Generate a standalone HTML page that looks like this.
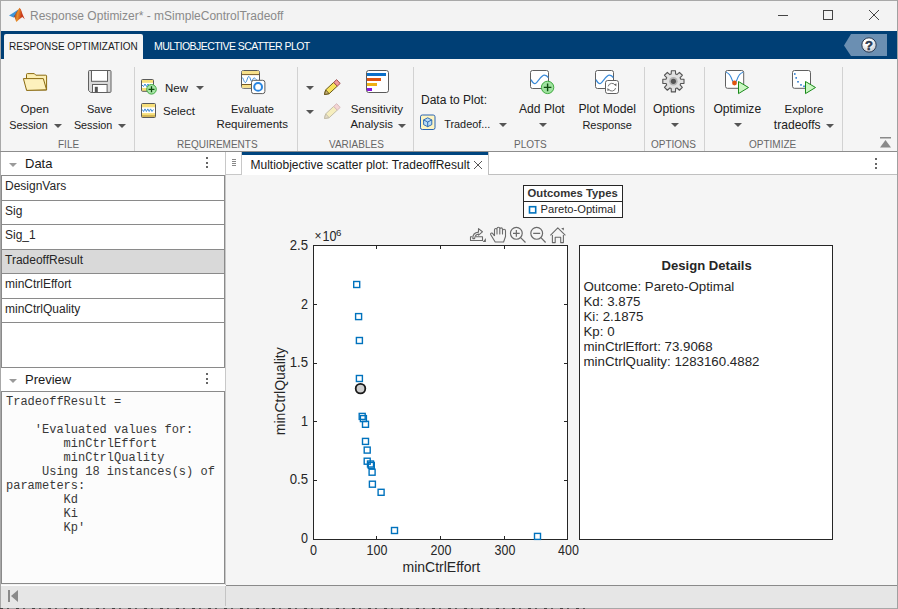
<!DOCTYPE html>
<html><head><meta charset="utf-8">
<style>
*{margin:0;padding:0;box-sizing:border-box;}
html,body{width:898px;height:609px;overflow:hidden;background:#f3f3f3;font-family:"Liberation Sans",sans-serif;}
.a{position:absolute;}
.t{position:absolute;white-space:nowrap;line-height:1;}
.ts{font-size:12px;color:#202020;}
.sec{font-size:10px;color:#666;}
.arr{position:absolute;width:0;height:0;border-left:4px solid transparent;border-right:4px solid transparent;border-top:4px solid #555;}
.sep{position:absolute;width:1px;background:#d2d2d2;top:67px;height:84px;}
.li{position:absolute;left:1px;width:223px;border-bottom:1px solid #9a9a9a;font-size:12px;color:#262626;}
.li span{position:absolute;left:4px;line-height:1;white-space:nowrap;}
.mono{font-family:"Liberation Mono",monospace;font-size:12px;color:#383838;line-height:14px;white-space:pre;}
</style></head>
<body>
<!-- window border -->
<div class="a" style="left:0;top:0;width:898px;height:609px;border:1px solid #a8a8a8;border-bottom:none;"></div>
<!-- title bar -->
<div class="a" style="left:1px;top:1px;width:896px;height:30px;background:#f3f3f3;"></div>
<svg class="a" style="left:0;top:0" width="30" height="30" viewBox="0 0 30 30">
  <defs><linearGradient id="og" x1="0" y1="0" x2="1" y2="0.3"><stop offset="0" stop-color="#8a1c12"/><stop offset="0.5" stop-color="#e8902a"/><stop offset="1" stop-color="#c8391a"/></linearGradient></defs>
  <polygon points="9,15.5 13,13 17.5,10 19,9.5 15.5,15 13.5,17.5" fill="#3d95d8"/>
  <polygon points="19.5,7.8 21,10 22.5,14 24.8,19.2 22.3,17 20,16" fill="#c83a1e"/>
  <polygon points="19.5,7.8 21,10 22.3,17 19,19.5 16.3,22 14.5,17 16,13" fill="url(#og)"/>
  <polygon points="19,9 16,13 14.5,17 13.5,17.5 15.5,14" fill="#6a1410"/>
  <polygon points="16.3,22 19,19.5 17.5,21" fill="#f0c030"/>
</svg>
<div class="t" style="left:30px;top:10px;font-size:12px;color:#8a8a8a;">Response Optimizer* - mSimpleControlTradeoff</div>
<!-- window controls -->
<div class="a" style="left:778px;top:15px;width:10px;height:1px;background:#444;"></div>
<div class="a" style="left:823px;top:10px;width:10px;height:10px;border:1px solid #444;"></div>
<svg class="a" style="left:868px;top:9px" width="12" height="12" viewBox="0 0 12 12"><path d="M1 1 L11 11 M11 1 L1 11" stroke="#444" stroke-width="1"/></svg>

<!-- blue tab bar -->
<div class="a" style="left:1px;top:31px;width:896px;height:28px;background:#003f75;"></div>
<div class="a" style="left:4px;top:34px;width:139px;height:25px;background:#f5f5f5;border-radius:2px 2px 0 0;"></div>
<div class="t" style="left:9px;top:41.5px;font-size:10px;color:#1a1a1a;">RESPONSE OPTIMIZATION</div>
<div class="t" style="left:154px;top:41px;font-size:10.5px;color:#ffffff;letter-spacing:-0.55px;">MULTIOBJECTIVE SCATTER PLOT</div>
<svg class="a" style="left:844px;top:34px" width="44" height="23" viewBox="0 0 44 23">
  <polygon points="0,11.5 7,0 43,0 43,22 7,22" fill="#6b8fb2"/>
  <defs><radialGradient id="hg" cx="0.4" cy="0.3" r="0.8"><stop offset="0.3" stop-color="#fff"/><stop offset="1" stop-color="#b8bcc4"/></radialGradient></defs>
  <circle cx="25" cy="11" r="7.2" fill="url(#hg)" stroke="#2a3a52" stroke-width="1"/>
  <text x="25" y="15.6" font-family="Liberation Sans" font-weight="bold" font-size="13" text-anchor="middle" fill="#2b3950" stroke="#2b3950" stroke-width="0.5">?</text>
</svg>

<!-- toolstrip -->
<div class="a" style="left:1px;top:59px;width:896px;height:92px;background:#f5f5f5;"></div>
<div class="a" style="left:0;top:151px;width:898px;height:1px;background:#8d8d8d;"></div>
<div class="sep" style="left:134px"></div>
<div class="sep" style="left:297px"></div>
<div class="sep" style="left:413px"></div>
<div class="sep" style="left:644px"></div>
<div class="sep" style="left:704px"></div>
<div class="sep" style="left:842px"></div>

<!-- FILE -->
<svg class="a" style="left:20px;top:70px" width="30" height="24" viewBox="20 70 30 24">
  <path d="M26.5,90 L26.5,74.5 Q26.5,73.6 27.4,73.6 L34.3,73.6 L35.8,75.2 L45.8,75.2 Q46.6,75.2 46.6,76 L46.6,90 Z" fill="#fcefb4" stroke="#8a6a10" stroke-width="1"/>
  <path d="M23.4,78.6 L43.3,78.6 L46.6,89.8 L26.6,90.4 Z" fill="#fdf1bd" stroke="#8a6a10" stroke-width="1" stroke-linejoin="round"/>
</svg>
<div class="t ts" style="left:20.5px;top:103.4px;font-size:11.6px;">Open</div>
<div class="t ts" style="left:9.3px;top:119.9px;font-size:10.8px;">Session</div>
<div class="arr" style="left:54px;top:124px;"></div>
<svg class="a" style="left:86px;top:68px" width="28" height="27" viewBox="86 68 28 27">
  <path d="M88.5,71.5 Q88.5,70.5 89.5,70.5 L110,70.5 Q111,70.5 111,71.5 L111,91.4 Q111,92.4 110,92.4 L90.5,92.4 L88.5,90.4 Z" fill="#d9d9d9" stroke="#606060" stroke-width="1"/>
  <rect x="91.5" y="70.5" width="16" height="10.8" fill="#fff" stroke="#606060" stroke-width="1"/>
  <rect x="92.5" y="84.5" width="14.6" height="8" fill="#fff" stroke="#606060" stroke-width="1"/>
  <rect x="94.8" y="86.8" width="3" height="5.3" fill="#555"/>
</svg>
<div class="t ts" style="left:87px;top:103.9px;font-size:11px;">Save</div>
<div class="t ts" style="left:73.9px;top:119.9px;font-size:10.8px;">Session</div>
<div class="arr" style="left:118px;top:124px;"></div>
<div class="t sec" style="left:58px;top:139.6px;">FILE</div>

<!-- REQUIREMENTS -->
<svg class="a" style="left:138px;top:76px" width="22" height="22" viewBox="138 76 22 22">
  <rect x="141.5" y="79.5" width="12" height="11.8" rx="1" fill="#f7df7a" stroke="#5a5a5a" stroke-width="1"/>
  <rect x="142" y="82.8" width="11" height="5.2" fill="#fff"/>
  <path d="M142,85 l1.5,1.5 l1.5,-2.5 l1.5,2.5 l1.5,-2.5 l1.5,2.5" fill="none" stroke="#3a8ad8" stroke-width="1"/>
  <circle cx="151.5" cy="89.3" r="4.8" fill="#a8e6a8" stroke="#3faa3f" stroke-width="1"/>
  <path d="M151.5,86.3 V92.3 M148.5,89.3 H154.5" stroke="#0e4a0e" stroke-width="1.3"/>
</svg>
<div class="t ts" style="left:165px;top:82.5px;font-size:11.5px;">New</div>
<div class="arr" style="left:196px;top:86px;"></div>
<svg class="a" style="left:139px;top:101px" width="19" height="19" viewBox="139 101 19 19">
  <rect x="141.5" y="103.5" width="14" height="14" rx="1" fill="#f7df7a" stroke="#5a5a5a" stroke-width="1"/>
  <rect x="142" y="107.3" width="13" height="5.8" fill="#fff"/>
  <path d="M142,116 H155" stroke="#9a7a2a" stroke-width="0.8"/>
  <path d="M142.2,109.5 l1.4,2 l1.4,-2.6 l1.4,2.6 l1.4,-2.6 l1.4,2.6 l1.4,-2.6 l1.4,2.6 l1.4,-2" fill="none" stroke="#3a8ad8" stroke-width="1"/>
</svg>
<div class="t ts" style="left:163px;top:105.5px;font-size:11.5px;">Select</div>
<svg class="a" style="left:238px;top:67px" width="30" height="30" viewBox="238 67 30 30">
  <rect x="241.5" y="70.5" width="18" height="17.8" rx="2" fill="#fff" stroke="#5a5a5a" stroke-width="1"/>
  <rect x="242" y="71" width="17" height="3.3" fill="#f7e08a"/>
  <path d="M242,74.6 H259" stroke="#6a4a10" stroke-width="0.9"/>
  <rect x="242" y="84.6" width="17" height="3.2" fill="#f7e08a"/>
  <path d="M242,84.5 H259" stroke="#6a4a10" stroke-width="0.9"/>
  <path d="M242.2,77.5 C243.5,78 244,83 245.5,82.5 C247,82 247.5,76 249,76.5 C250.3,77 250.5,81 251.5,81 C252.5,81 253,77.5 254.5,78 C255.5,78.5 256,80 257,80" fill="none" stroke="#3a8ad8" stroke-width="1"/>
  <rect x="251.5" y="80.3" width="13.4" height="13.3" rx="2.2" fill="#fff" stroke="#5a5a5a" stroke-width="1"/>
  <circle cx="258.1" cy="86.9" r="3.9" fill="none" stroke="#2a86e0" stroke-width="2"/>
</svg>
<div class="t ts" style="left:231px;top:103.9px;font-size:11px;">Evaluate</div>
<div class="t ts" style="left:216.4px;top:119.3px;font-size:11.5px;">Requirements</div>
<div class="t sec" style="left:177px;top:139.6px;">REQUIREMENTS</div>

<!-- VARIABLES -->
<div class="arr" style="left:306px;top:86px;"></div>
<div class="arr" style="left:306px;top:110px;"></div>
<svg class="a" style="left:323px;top:78px" width="19" height="19" viewBox="0 0 19 19">
  <path d="M1.5,16.5 L2.66,11.87 L10.71,4.37 L14.25,8.17 L6.2,15.67 Z" fill="#f8e25a" stroke="#6a5a20" stroke-width="1"/>
  <path d="M10.71,4.37 L13.63,1.64 L17.17,5.44 L14.25,8.17 Z" fill="#f39a9a" stroke="#a05050" stroke-width="1"/>
  <path d="M1.5,16.5 L2.66,11.87 L6.2,15.67 Z" fill="#c8b07a" stroke="#6a5a20" stroke-width="1"/>
</svg>
<svg class="a" style="left:323px;top:102px" width="19" height="19" viewBox="0 0 19 19" opacity="0.35">
  <path d="M1.5,16.5 L2.66,11.87 L10.71,4.37 L14.25,8.17 L6.2,15.67 Z" fill="#f8e25a" stroke="#6a5a20" stroke-width="1"/>
  <path d="M10.71,4.37 L13.63,1.64 L17.17,5.44 L14.25,8.17 Z" fill="#f39a9a" stroke="#a05050" stroke-width="1"/>
  <path d="M1.5,16.5 L2.66,11.87 L6.2,15.67 Z" fill="#c8b07a" stroke="#6a5a20" stroke-width="1"/>
</svg>
<svg class="a" style="left:363px;top:67px" width="29" height="29" viewBox="363 67 29 29">
  <rect x="366.5" y="70.5" width="22" height="22" rx="2.2" fill="#fff" stroke="#5a5a5a" stroke-width="1"/>
  <rect x="367" y="73" width="19" height="3" fill="#0b6fc8"/>
  <rect x="367" y="78" width="14" height="3" fill="#dd5410"/>
  <rect x="367" y="83" width="10" height="3" fill="#eeb014"/>
  <rect x="367" y="88" width="5" height="3" fill="#8a16d8"/>
</svg>
<div class="t ts" style="left:350.8px;top:103.4px;font-size:11.6px;">Sensitivity</div>
<div class="t ts" style="left:350.5px;top:119.3px;font-size:11.4px;">Analysis</div>
<div class="arr" style="left:398px;top:124px;"></div>
<div class="t sec" style="left:329px;top:139.6px;">VARIABLES</div>

<!-- PLOTS -->
<div class="t ts" style="left:421px;top:94.0px;font-size:12px;">Data to Plot:</div>
<svg class="a" style="left:418px;top:113px" width="19" height="19" viewBox="418 113 19 19">
  <rect x="420.5" y="115" width="14.5" height="14.5" rx="1.8" fill="#fff5c2" stroke="#2a64b0" stroke-width="1"/>
  <path d="M427.7,117.8 L431.8,119.9 L431.8,124.6 L427.7,126.7 L423.6,124.6 L423.6,119.9 Z" fill="#b9dcf6" stroke="#1f5fae" stroke-width="0.9" stroke-linejoin="round"/>
  <path d="M423.6,119.9 L427.7,122 L431.8,119.9 M427.7,122 V126.7" fill="none" stroke="#1f5fae" stroke-width="0.9"/>
</svg>
<div class="t ts" style="left:444.2px;top:118.6px;font-size:10.9px;">Tradeof...</div>
<div class="arr" style="left:499px;top:123px;"></div>
<svg class="a" style="left:528px;top:68px" width="28" height="28" viewBox="528 68 28 28">
  <rect x="530.5" y="70.5" width="18" height="18" rx="2" fill="#fff" stroke="#606060" stroke-width="1"/>
  <path d="M531,79.6 C532.5,82.5 534,84 535.5,83.5 C538,82.5 541,75 544.5,75.2 C546,75.4 547.5,76.5 548.3,77.7" fill="none" stroke="#3a8ad8" stroke-width="1.2"/>
  <circle cx="547.6" cy="87.4" r="6.2" fill="#9fe39f" stroke="#3faa3f" stroke-width="1"/>
  <path d="M547.6,83.6 V91.2 M543.8,87.4 H551.4" stroke="#0e4a0e" stroke-width="1.4"/>
</svg>
<div class="t ts" style="left:519px;top:103.0px;font-size:12.1px;">Add Plot</div>
<div class="arr" style="left:539px;top:123px;"></div>
<svg class="a" style="left:593px;top:68px" width="28" height="28" viewBox="593 68 28 28">
  <rect x="595.5" y="70.5" width="18" height="18" rx="2" fill="#fff" stroke="#606060" stroke-width="1"/>
  <path d="M596,79.6 C597.5,82.5 599,84 600.5,83.5 C603,82.5 606,75 609.5,75.2 C611,75.4 612.5,76.5 613.3,77.7" fill="none" stroke="#3a8ad8" stroke-width="1.2"/>
  <rect x="605.5" y="80.5" width="13" height="13" rx="2.2" fill="#fff" stroke="#606060" stroke-width="1"/>
  <path d="M608.2,86.4 A3.8,3.8 0 0 1 615.4,85.6 M615.6,88 A3.8,3.8 0 0 1 608.4,88.8" fill="none" stroke="#666" stroke-width="0.9"/>
  <path d="M614.2,84.2 L616.3,86.4 L616.5,83.6 Z M609.6,90.2 L607.5,88 L607.3,90.8 Z" fill="#666"/>
</svg>
<div class="t ts" style="left:578.4px;top:102.9px;font-size:12.2px;">Plot Model</div>
<div class="t ts" style="left:582.4px;top:119.7px;font-size:11px;">Response</div>
<div class="t sec" style="left:514px;top:139.6px;">PLOTS</div>

<!-- OPTIONS -->
<svg class="a" style="left:659px;top:67px" width="29" height="29" viewBox="659 67 29 29">
  <path d="M671.18,74.03 L671.34,70.70 L675.46,70.70 L675.62,74.03 L676.97,74.59 L679.44,72.35 L682.35,75.26 L680.11,77.73 L680.67,79.08 L684.00,79.24 L684.00,83.36 L680.67,83.52 L680.11,84.87 L682.35,87.34 L679.44,90.25 L676.97,88.01 L675.62,88.57 L675.46,91.90 L671.34,91.90 L671.18,88.57 L669.83,88.01 L667.36,90.25 L664.45,87.34 L666.69,84.87 L666.13,83.52 L662.80,83.36 L662.80,79.24 L666.13,79.08 L666.69,77.73 L664.45,75.26 L667.36,72.35 L669.83,74.59 Z" fill="#e0e0e0" stroke="#555" stroke-width="1.1" stroke-linejoin="round"/>
  <circle cx="673.4" cy="81.3" r="4.3" fill="#b4b4b4"/>
  <circle cx="673.4" cy="81.3" r="2.6" fill="#555"/>
</svg>
<div class="t ts" style="left:653px;top:103.0px;font-size:12.1px;">Options</div>
<div class="arr" style="left:671px;top:123px;"></div>
<div class="t sec" style="left:651px;top:139.6px;">OPTIONS</div>

<!-- OPTIMIZE -->
<svg class="a" style="left:722px;top:67px" width="30" height="30" viewBox="722 67 30 30">
  <rect x="725.5" y="70.5" width="18.2" height="17.8" rx="2" fill="#fff" stroke="#606060" stroke-width="1"/>
  <path d="M726,72.2 C729.5,73 731.2,77 732.3,80.3 Q734.5,86 736.7,80.3 C737.8,77 739.5,73 743.2,72.2" fill="none" stroke="#3a8ad8" stroke-width="1.1"/>
  <circle cx="734.5" cy="83" r="2.4" fill="#e0560f"/>
  <path d="M738.5,81.5 L748.5,87.5 L738.5,93.6 Z" fill="#cbf7c3" stroke="#1a8a1a" stroke-width="1" stroke-linejoin="round"/>
</svg>
<div class="t ts" style="left:713.4px;top:103.0px;font-size:12.1px;">Optimize</div>
<div class="arr" style="left:734px;top:123px;"></div>
<svg class="a" style="left:789px;top:67px" width="30" height="30" viewBox="789 67 30 30">
  <rect x="792.5" y="70.5" width="18" height="17.8" rx="2" fill="#fff" stroke="#606060" stroke-width="1"/>
  <g fill="#2a7bd0"><rect x="794" y="73.2" width="1.6" height="1.6"/><rect x="795.4" y="77.1" width="1.6" height="1.6"/><rect x="797.2" y="81" width="1.6" height="1.6"/><rect x="800.2" y="84.1" width="1.6" height="1.6"/><rect x="803.2" y="85.5" width="1.6" height="1.6"/></g>
  <path d="M805.5,81.5 L815.5,87.5 L805.5,93.6 Z" fill="#cbf7c3" stroke="#1a8a1a" stroke-width="1" stroke-linejoin="round"/>
</svg>
<div class="t ts" style="left:784.5px;top:103.5px;font-size:11.5px;">Explore</div>
<div class="t ts" style="left:773.8px;top:118.8px;font-size:12.1px;">tradeoffs</div>
<div class="arr" style="left:826px;top:124px;"></div>
<div class="t sec" style="left:749px;top:139.6px;">OPTIMIZE</div>
<svg class="a" style="left:879px;top:136px" width="13" height="13" viewBox="0 0 13 13">
  <rect x="1" y="1" width="11" height="1.5" fill="#8a8a8a"/>
  <path d="M1 11.5 L6.5 4 L12 11.5 Z" fill="#8a8a8a"/>
</svg>

<!-- LEFT PANEL: Data -->
<div class="a" style="left:1px;top:152px;width:224px;height:23px;background:#fff;"></div>
<div class="arr" style="left:9px;top:163px;border-top-color:#9a9a9a;border-left-width:4px;border-right-width:4px;"></div>
<div class="t" style="left:25px;top:157px;font-size:13px;color:#1a1a1a;">Data</div>
<div class="a" style="left:206px;top:157px;width:2px;height:2px;background:#666;"></div>
<div class="a" style="left:206px;top:162px;width:2px;height:2px;background:#666;"></div>
<div class="a" style="left:206px;top:166px;width:2px;height:2px;background:#666;"></div>
<div class="a" style="left:1px;top:175px;width:224px;height:193px;background:#fff;border:1px solid #8a8a8a;"></div>
<div class="a" style="left:2px;top:250px;width:222px;height:23px;background:#d9d9d9;"></div>
<div class="a" style="left:2px;top:200px;width:222px;height:1px;background:#8a8a8a;"></div>
<div class="a" style="left:2px;top:224px;width:222px;height:1px;background:#8a8a8a;"></div>
<div class="a" style="left:2px;top:249px;width:222px;height:1px;background:#8a8a8a;"></div>
<div class="a" style="left:2px;top:273px;width:222px;height:1px;background:#8a8a8a;"></div>
<div class="a" style="left:2px;top:298px;width:222px;height:1px;background:#8a8a8a;"></div>
<div class="a" style="left:2px;top:322px;width:222px;height:1px;background:#8a8a8a;"></div>
<div class="t" style="left:5px;top:180px;font-size:12px;color:#262626;">DesignVars</div>
<div class="t" style="left:5px;top:204.5px;font-size:12px;color:#262626;">Sig</div>
<div class="t" style="left:5px;top:229px;font-size:12px;color:#262626;">Sig_1</div>
<div class="t" style="left:5px;top:253.5px;font-size:12px;color:#262626;">TradeoffResult</div>
<div class="t" style="left:5px;top:278px;font-size:12px;color:#262626;">minCtrlEffort</div>
<div class="t" style="left:5px;top:302.5px;font-size:12px;color:#262626;">minCtrlQuality</div>

<!-- Preview -->
<div class="a" style="left:1px;top:368px;width:224px;height:23px;background:#fff;"></div>
<div class="arr" style="left:9px;top:379px;border-top-color:#9a9a9a;"></div>
<div class="t" style="left:25px;top:373px;font-size:13px;color:#1a1a1a;">Preview</div>
<div class="a" style="left:206px;top:373px;width:2px;height:2px;background:#666;"></div>
<div class="a" style="left:206px;top:378px;width:2px;height:2px;background:#666;"></div>
<div class="a" style="left:206px;top:382px;width:2px;height:2px;background:#666;"></div>
<div class="a" style="left:1px;top:391px;width:224px;height:193px;background:#fcfcfc;border:1px solid #8a8a8a;"></div>
<div class="a mono" style="left:6px;top:395.3px;">TradeoffResult =

    'Evaluated values for:
        minCtrlEffort
        minCtrlQuality
     Using 18 instances(s) of
parameters:
        Kd
        Ki
        Kp'</div>

<!-- DOC AREA -->
<div class="a" style="left:225px;top:152px;width:17px;height:23px;background:#fff;border:1px solid #c8c8c8;border-top:none;"></div>
<div class="a" style="left:232px;top:159px;width:4px;height:1px;background:#888;"></div>
<div class="a" style="left:232px;top:161px;width:4px;height:1px;background:#888;"></div>
<div class="a" style="left:232px;top:163px;width:4px;height:1px;background:#888;"></div>
<div class="a" style="left:232px;top:165px;width:4px;height:1px;background:#888;"></div>
<div class="a" style="left:242px;top:152px;width:246px;height:23px;background:#fff;border-top:3px solid #00457f;"></div>
<div class="t" style="left:250.5px;top:159px;font-size:12px;color:#1a1a1a;">Multiobjective scatter plot: TradeoffResult</div>
<svg class="a" style="left:473px;top:160px" width="10" height="10" viewBox="0 0 10 10"><path d="M1 1 L9 9 M9 1 L1 9" stroke="#555" stroke-width="1"/></svg>
<div class="a" style="left:488px;top:152px;width:409px;height:23px;background:#fff;border-left:1px solid #c0c0c0;border-bottom:1px solid #c0c0c0;"></div>
<div class="a" style="left:875px;top:158px;width:2px;height:2px;background:#666;"></div>
<div class="a" style="left:875px;top:163px;width:2px;height:2px;background:#666;"></div>
<div class="a" style="left:875px;top:167px;width:2px;height:2px;background:#666;"></div>
<div class="a" style="left:226px;top:175px;width:671px;height:410px;background:#f5f5f5;"></div>
<div class="a" style="left:225px;top:175px;width:1px;height:411px;background:#c8c8c8;"></div>

<!-- legend -->
<div class="a" style="left:523px;top:185px;width:100px;height:33px;background:#fff;border:1px solid #262626;"></div>
<div class="a" style="left:523px;top:201px;width:100px;height:1px;background:#262626;"></div>
<div class="t" style="left:527.5px;top:188px;font-size:11.3px;font-weight:bold;color:#333;">Outcomes Types</div>
<svg class="a" style="left:527px;top:204px" width="12" height="12" viewBox="0 0 12 12"><rect x="2.5" y="2.7" width="6.2" height="6.2" fill="none" stroke="#0072bd" stroke-width="1.6"/></svg>
<div class="t" style="left:540.5px;top:203.5px;font-size:11.2px;color:#262626;">Pareto-Optimal</div>

<!-- axes toolbar -->
<svg class="a" style="left:465px;top:222px" width="110" height="24" viewBox="465 222 110 24" fill="none" stroke="#6a6a6a" stroke-width="1.1" stroke-linejoin="round">
  <path d="M476,236.8 L482.5,236.8 L482.5,240.5 L470.5,240.5 L470.5,236.8 L472,236.8"/>
  <path d="M472.8,238.6 Q472.6,232.6 478.5,232.1 L478.5,228.6 L482.4,231.8 L478.6,235.1 L478.6,234.1 Q475.2,234.3 474.6,238.6 Z"/>
  <path d="M482.7,241.9 L485.9,241.9 L485.9,238.1 Z" fill="#6a6a6a" stroke="none"/>
  <path d="M494.5,236 L494.5,229.8 a1.25,1.25 0 0 1 2.5,0 L497,234 L497,228.7 a1.4,1.4 0 0 1 2.8,0 L499.8,234 L499.8,229.2 a1.35,1.35 0 0 1 2.7,0 L502.5,234 L502.5,230.8 a1.5,1.5 0 0 1 3,0 L505.5,236.5 L503.6,242 L495.2,242 L490.6,234.5 a1.2,1.2 0 0 1 1.8,-1.3 L494.5,236"/>
  <circle cx="516.35" cy="233.35" r="5.9" stroke-width="1.2"/>
  <path d="M520.6,237.6 L525.5,242.5 M513,233.35 H519.7 M516.35,230 V236.7" stroke-width="1.2"/>
  <circle cx="536.7" cy="233.35" r="5.9" stroke-width="1.2"/>
  <path d="M540.9,237.6 L545.6,242.5 M533.2,233.35 H540.2" stroke-width="1.2"/>
  <path d="M550.4,235.4 L557.8,227.9 L565.4,235.4 M552.4,235 V242.6 H555.2 V237.2 H560.7 V242.6 H563.4 V235" stroke-width="1.1"/>
  <path d="M561.2,228.2 L564,227.8 L563.6,230.6 Z" fill="#6a6a6a" stroke="none"/>
</svg>

<!-- axes -->
<svg class="a" style="left:260px;top:225px" width="580" height="360" viewBox="260 225 580 360">
  <rect x="313.5" y="245.5" width="254" height="294" fill="#fff" stroke="#262626" stroke-width="1"/>
  <g stroke="#262626" stroke-width="1">
    <path d="M376.5 539 v-3 M440.5 539 v-3 M504.5 539 v-3 M376.5 246 v3 M440.5 246 v3 M504.5 246 v3"/>
    <path d="M314 480.5 h3 M314 421.5 h3 M314 363.5 h3 M314 304.5 h3 M567 480.5 h-3 M567 421.5 h-3 M567 363.5 h-3 M567 304.5 h-3"/>
  </g>
  <g font-family="Liberation Sans" font-size="14" fill="#262626" text-anchor="end">
    <text x="308" y="250" textLength="18.3" lengthAdjust="spacingAndGlyphs">2.5</text>
    <text x="308" y="309" textLength="7" lengthAdjust="spacingAndGlyphs">2</text>
    <text x="308" y="367" textLength="18.3" lengthAdjust="spacingAndGlyphs">1.5</text>
    <text x="308" y="426" textLength="7" lengthAdjust="spacingAndGlyphs">1</text>
    <text x="308" y="483.8" textLength="18.3" lengthAdjust="spacingAndGlyphs">0.5</text>
    <text x="308" y="542.8" textLength="7" lengthAdjust="spacingAndGlyphs">0</text>
  </g>
  <g font-family="Liberation Sans" font-size="14" fill="#262626" text-anchor="middle">
    <text x="313.5" y="555" textLength="7" lengthAdjust="spacingAndGlyphs">0</text>
    <text x="377" y="555" textLength="20.8" lengthAdjust="spacingAndGlyphs">100</text>
    <text x="441" y="555" textLength="20.8" lengthAdjust="spacingAndGlyphs">200</text>
    <text x="505" y="555" textLength="20.8" lengthAdjust="spacingAndGlyphs">300</text>
    <text x="568.5" y="555" textLength="20.8" lengthAdjust="spacingAndGlyphs">400</text>
    <text x="441.3" y="572" font-size="14">minCtrlEffort</text>
    <text x="0" y="0" font-size="14" transform="translate(284.5,391.2) rotate(-90)">minCtrlQuality</text>
  </g>
  <text x="314.6" y="240" font-family="Liberation Sans" font-size="12" fill="#262626">×</text><text x="322.6" y="241" font-family="Liberation Sans" font-size="14" fill="#262626" textLength="14" lengthAdjust="spacingAndGlyphs">10</text>
  <text x="336" y="235.8" font-family="Liberation Sans" font-size="9.7" fill="#262626" textLength="5.4" lengthAdjust="spacingAndGlyphs">6</text>
  <g fill="none" stroke="#0072bd" stroke-width="1.4">
    <rect x="353.7" y="281.5" width="6" height="6"/>
    <rect x="355.6" y="313.6" width="6" height="6"/>
    <rect x="356.4" y="337.5" width="6" height="6"/>
    <rect x="356.4" y="375.5" width="6" height="6"/>
    <rect x="359.2" y="413.4" width="6" height="6"/>
    <rect x="360.4" y="415.6" width="6" height="6"/>
    <rect x="362.5" y="421.3" width="6" height="6"/>
    <rect x="362.5" y="438.4" width="6" height="6"/>
    <rect x="364.2" y="447.1" width="6" height="6"/>
    <rect x="364.2" y="458.2" width="6" height="6"/>
    <rect x="367.5" y="461.0" width="6" height="6"/>
    <rect x="368.3" y="462.4" width="6" height="6"/>
    <rect x="369.1" y="469.2" width="6" height="6"/>
    <rect x="369.4" y="481.2" width="6" height="6"/>
    <rect x="378.1" y="489.3" width="6" height="6"/>
    <rect x="391.5" y="527.5" width="6" height="6"/>
    <rect x="534.5" y="533.4" width="6" height="6"/>
  </g>
  <circle cx="360.5" cy="388.6" r="4.8" fill="#cfcfcf" stroke="#1a1a1a" stroke-width="1.8"/>
  <!-- design details -->
  <rect x="579.5" y="245.5" width="253" height="294" fill="#fff" stroke="#262626" stroke-width="1"/>
  <g font-family="Liberation Sans" font-size="13.3" fill="#262626">
    <text x="661.5" y="270" font-weight="bold" font-size="13.1">Design Details</text>
    <text x="583.5" y="291">Outcome: Pareto-Optimal</text>
    <text x="583.5" y="306">Kd: 3.875</text>
    <text x="583.5" y="321">Ki: 2.1875</text>
    <text x="583.5" y="336">Kp: 0</text>
    <text x="583.5" y="351">minCtrlEffort: 73.9068</text>
    <text x="583.5" y="366">minCtrlQuality: 1283160.4882</text>
  </g>
</svg>

<!-- status bar -->
<div class="a" style="left:1px;top:585px;width:896px;height:1px;background:#fdfdfd;"></div>
<div class="a" style="left:226px;top:585px;width:671px;height:1px;background:#8a8a8a;"></div>
<div class="a" style="left:1px;top:586px;width:896px;height:20px;background:#e6e6e6;"></div>
<div class="a" style="left:225px;top:586px;width:1px;height:20px;background:#c4c4c4;"></div>
<svg class="a" style="left:7px;top:589px" width="12" height="14" viewBox="0 0 12 14"><rect x="1" y="1" width="2" height="12" fill="#8a8a8a"/><path d="M11 1 L4 7 L11 13 Z" fill="#8a8a8a"/></svg>
<div class="a" style="left:1px;top:606px;width:896px;height:2px;background:#e6e6e6;"></div>
<div class="a" style="left:0;top:608px;width:898px;height:1px;background:#a8a8a8;"></div>
<div class="a" style="left:0;top:608px;width:590px;height:1px;background:repeating-linear-gradient(90deg,#444 0 3px,transparent 3px 7px,#555 7px 9px,transparent 9px 16px);"></div>
<div class="a" style="left:897px;top:0;width:1px;height:609px;background:#a0a0a0;"></div>
</body></html>
